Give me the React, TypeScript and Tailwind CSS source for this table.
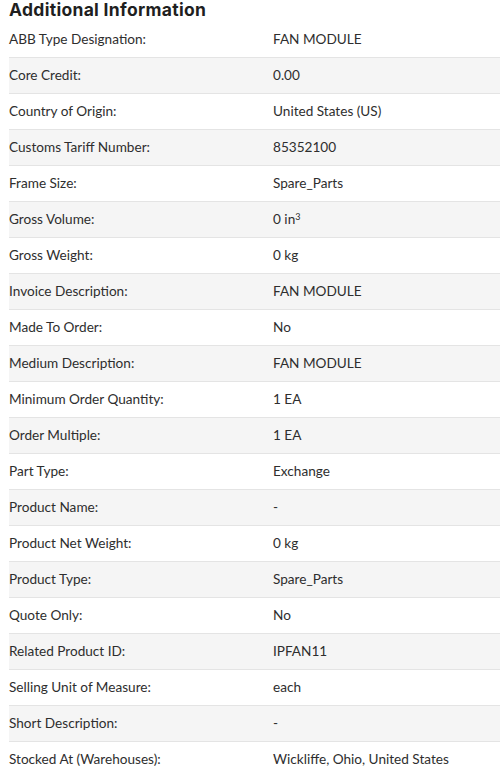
import React from 'react';

const rows: [string, React.ReactNode][] = [
  ['ABB Type Designation:', 'FAN MODULE'],
  ['Core Credit:', '0.00'],
  ['Country of Origin:', 'United States (US)'],
  ['Customs Tariff Number:', '85352100'],
  ['Frame Size:', 'Spare_Parts'],
  ['Gross Volume:', <>0 in<sup className="text-[9px]">3</sup></>],
  ['Gross Weight:', '0 kg'],
  ['Invoice Description:', 'FAN MODULE'],
  ['Made To Order:', 'No'],
  ['Medium Description:', 'FAN MODULE'],
  ['Minimum Order Quantity:', '1 EA'],
  ['Order Multiple:', '1 EA'],
  ['Part Type:', 'Exchange'],
  ['Product Name:', '-'],
  ['Product Net Weight:', '0 kg'],
  ['Product Type:', 'Spare_Parts'],
  ['Quote Only:', 'No'],
  ['Related Product ID:', 'IPFAN11'],
  ['Selling Unit of Measure:', 'each'],
  ['Short Description:', '-'],
  ['Stocked At (Warehouses):', 'Wickliffe, Ohio, United States'],
];

export default function App() {
  return (
    <div className="w-[500px] h-[774px] overflow-hidden bg-white pl-[9px] font-['Lato','Open_Sans',sans-serif] text-[#2e2e2e]">
      <h2 className="h-[22px] font-['Inter',sans-serif] text-[17.5px] leading-[20px] tracking-[0.3px] font-bold text-[#1f1f1f]">Additional Information</h2>
      <div>
        {rows.map(([label, value], i) => (
          <div
            key={label}
            className={`grid grid-cols-[264px_1fr] h-9 items-center border-b border-[#e4e4e4] text-[13.6px] ${i % 2 === 1 ? 'bg-[#f5f5f5]' : 'bg-white'}`}
          >
            <span>{label}</span>
            <span>{value}</span>
          </div>
        ))}
      </div>
    </div>
  );
}
